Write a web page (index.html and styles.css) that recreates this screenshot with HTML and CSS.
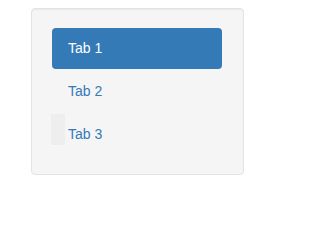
FILE: index.html
```html
<!DOCTYPE html>
<html>
<head>
<meta charset="utf-8">
<link rel="stylesheet" href="styles.css">
</head>
<body>
<div class="page">
  <div class="well">
    <ul class="pills">
      <li class="pill active"><a href="#">Tab 1</a></li>
      <li class="pill"><a href="#">Tab 2</a></li>
      <li class="pill ghost"><a href="#">Tab 3</a></li>
    </ul>
  </div>
</div>
</body>
</html>
```
FILE: styles.css
```css
html, body {
  margin: 0;
  padding: 0;
  background: #fff;
}
.page {
  padding: 8px 0 0 31px;
  font-family: "Liberation Sans", Arial, sans-serif;
  font-size: 14px;
}
.well {
  box-sizing: border-box;
  width: 213px;
  height: 167px;
  padding: 19px 21px 19px 20px;
  background: #f5f5f5;
  border: 1px solid #e3e3e3;
  border-radius: 4px;
  box-shadow: inset 0 1px 1px rgba(0,0,0,0.05);
}
.pills {
  list-style: none;
  margin: 0;
  padding: 0;
  display: flex;
  flex-direction: column;
  gap: 2px;
}
.pill {
  position: relative;
}
.pill a {
  display: block;
  padding: 10px 15px 10px 16px;
  line-height: 21px;
  color: #337ab7;
  text-decoration: none;
  border-radius: 4px;
}
.pill.active a {
  background: #337ab7;
  color: #fff;
}
.pill.ghost::before {
  content: "";
  position: absolute;
  left: -1px;
  top: 0;
  width: 14px;
  height: 31px;
  background: #eeeeee;
}
.pill.ghost a {
  position: relative;
}
```
